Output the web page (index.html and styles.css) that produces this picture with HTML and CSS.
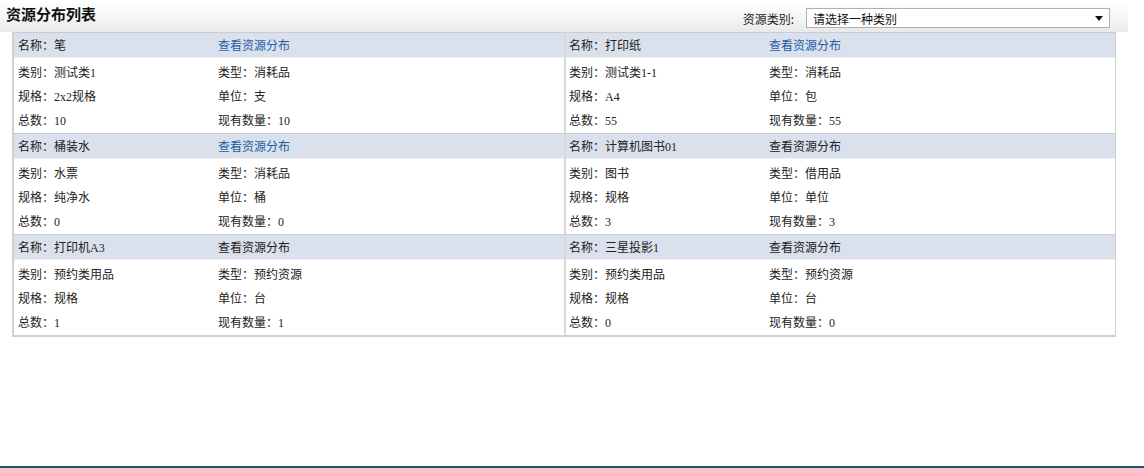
FILE: index.html
```html
<!DOCTYPE html>
<html lang="zh-CN">
<head>
<meta charset="utf-8">
<title>资源分布列表</title>
<link rel="stylesheet" href="styles.css">
</head>
<body>
<div class="page">
  <div class="topbar">
    <h1 class="title">资源分布列表</h1>
    <div class="filter">
      <span class="filter-label">资源类别:</span>
      <div class="select"><span>请选择一种类别</span><span class="arrow"></span></div>
    </div>
  </div>
  <div class="grid">
    <div class="item">
      <div class="item-head"><span class="c1">名称：笔</span><span class="c2 link">查看资源分布</span></div>
      <div class="item-body">
        <div class="row"><span class="c1">类别：测试类1</span><span class="c2">类型：消耗品</span></div>
        <div class="row"><span class="c1">规格：2x2规格</span><span class="c2">单位：支</span></div>
        <div class="row"><span class="c1">总数：10</span><span class="c2">现有数量：10</span></div>
      </div>
    </div>
    <div class="item right">
      <div class="item-head"><span class="c1">名称：打印纸</span><span class="c2 link">查看资源分布</span></div>
      <div class="item-body">
        <div class="row"><span class="c1">类别：测试类1-1</span><span class="c2">类型：消耗品</span></div>
        <div class="row"><span class="c1">规格：A4</span><span class="c2">单位：包</span></div>
        <div class="row"><span class="c1">总数：55</span><span class="c2">现有数量：55</span></div>
      </div>
    </div>
    <div class="item">
      <div class="item-head"><span class="c1">名称：桶装水</span><span class="c2 link">查看资源分布</span></div>
      <div class="item-body">
        <div class="row"><span class="c1">类别：水票</span><span class="c2">类型：消耗品</span></div>
        <div class="row"><span class="c1">规格：纯净水</span><span class="c2">单位：桶</span></div>
        <div class="row"><span class="c1">总数：0</span><span class="c2">现有数量：0</span></div>
      </div>
    </div>
    <div class="item right">
      <div class="item-head"><span class="c1">名称：计算机图书01</span><span class="c2">查看资源分布</span></div>
      <div class="item-body">
        <div class="row"><span class="c1">类别：图书</span><span class="c2">类型：借用品</span></div>
        <div class="row"><span class="c1">规格：规格</span><span class="c2">单位：单位</span></div>
        <div class="row"><span class="c1">总数：3</span><span class="c2">现有数量：3</span></div>
      </div>
    </div>
    <div class="item">
      <div class="item-head"><span class="c1">名称：打印机A3</span><span class="c2">查看资源分布</span></div>
      <div class="item-body">
        <div class="row"><span class="c1">类别：预约类用品</span><span class="c2">类型：预约资源</span></div>
        <div class="row"><span class="c1">规格：规格</span><span class="c2">单位：台</span></div>
        <div class="row"><span class="c1">总数：1</span><span class="c2">现有数量：1</span></div>
      </div>
    </div>
    <div class="item right">
      <div class="item-head"><span class="c1">名称：三星投影1</span><span class="c2">查看资源分布</span></div>
      <div class="item-body">
        <div class="row"><span class="c1">类别：预约类用品</span><span class="c2">类型：预约资源</span></div>
        <div class="row"><span class="c1">规格：规格</span><span class="c2">单位：台</span></div>
        <div class="row"><span class="c1">总数：0</span><span class="c2">现有数量：0</span></div>
      </div>
    </div>
  </div>
</div>
</body>
</html>
```
FILE: styles.css
```css
html, body {
  margin: 0;
  padding: 0;
  background: #fff;
}
body {
  font-family: "Liberation Serif", "Noto Sans CJK SC", serif;
  font-size: 12px;
  color: #222;
}
.page {
  height: 466px;
  border-bottom: 2px solid #1e5566;
}
.topbar {
  height: 32px;
  width: 1128px;
  display: flex;
  justify-content: space-between;
  background: linear-gradient(to bottom, #ffffff 0%, #f4f4f4 60%, #e9e9e9 100%);
}
.title {
  margin: 0;
  padding: 4px 0 0 6px;
  font-family: "Noto Sans CJK SC", sans-serif;
  font-size: 15px;
  font-weight: bold;
  line-height: 20px;
  color: #111;
}
.filter {
  display: flex;
  align-items: flex-start;
  padding-top: 8px;
  margin-right: 18px;
}
.filter-label {
  font-family: "Noto Sans CJK SC", sans-serif;
  line-height: 22px;
  margin-right: 12px;
  color: #222;
}
.select {
  width: 290px;
  height: 18px;
  border: 1px solid #b0b0b0;
  background: #fff;
  display: flex;
  justify-content: space-between;
  align-items: center;
  padding: 0 6px 0 6px;
  font-family: "Noto Sans CJK SC", sans-serif;
  font-size: 12px;
  color: #111;
}
.arrow {
  width: 0;
  height: 0;
  border-left: 4px solid transparent;
  border-right: 4px solid transparent;
  border-top: 5px solid #111;
}
.grid {
  margin-left: 12px;
  width: 1104px;
  display: grid;
  grid-template-columns: 550px 1fr;
  border-left: 2px solid #d0d0d0;
  border-right: 1px solid #d0d0d0;
  border-bottom: 2px solid #d0d0d0;
  box-sizing: border-box;
}
.item {
  display: flex;
  flex-direction: column;
}
.item.right {
  border-left: 2px solid #d8d8d8;
}
.item-head {
  height: 24px;
  border-top: 1px solid #c8ccd4;
  background: #dae1ec;
  display: flex;
  align-items: center;
  padding-left: 4px;
}
.item.right .item-head,
.item.right .item-body {
  padding-left: 3px;
}
.item-body {
  padding: 2px 0 1px 4px;
  border-top: 1px solid #eef0f4;
}
.row {
  height: 24px;
  display: flex;
  align-items: center;
}
.c1 {
  width: 200px;
  flex: none;
}
.c2 {
  flex: 1;
}
.link {
  color: #1d5fa6;
}
```
